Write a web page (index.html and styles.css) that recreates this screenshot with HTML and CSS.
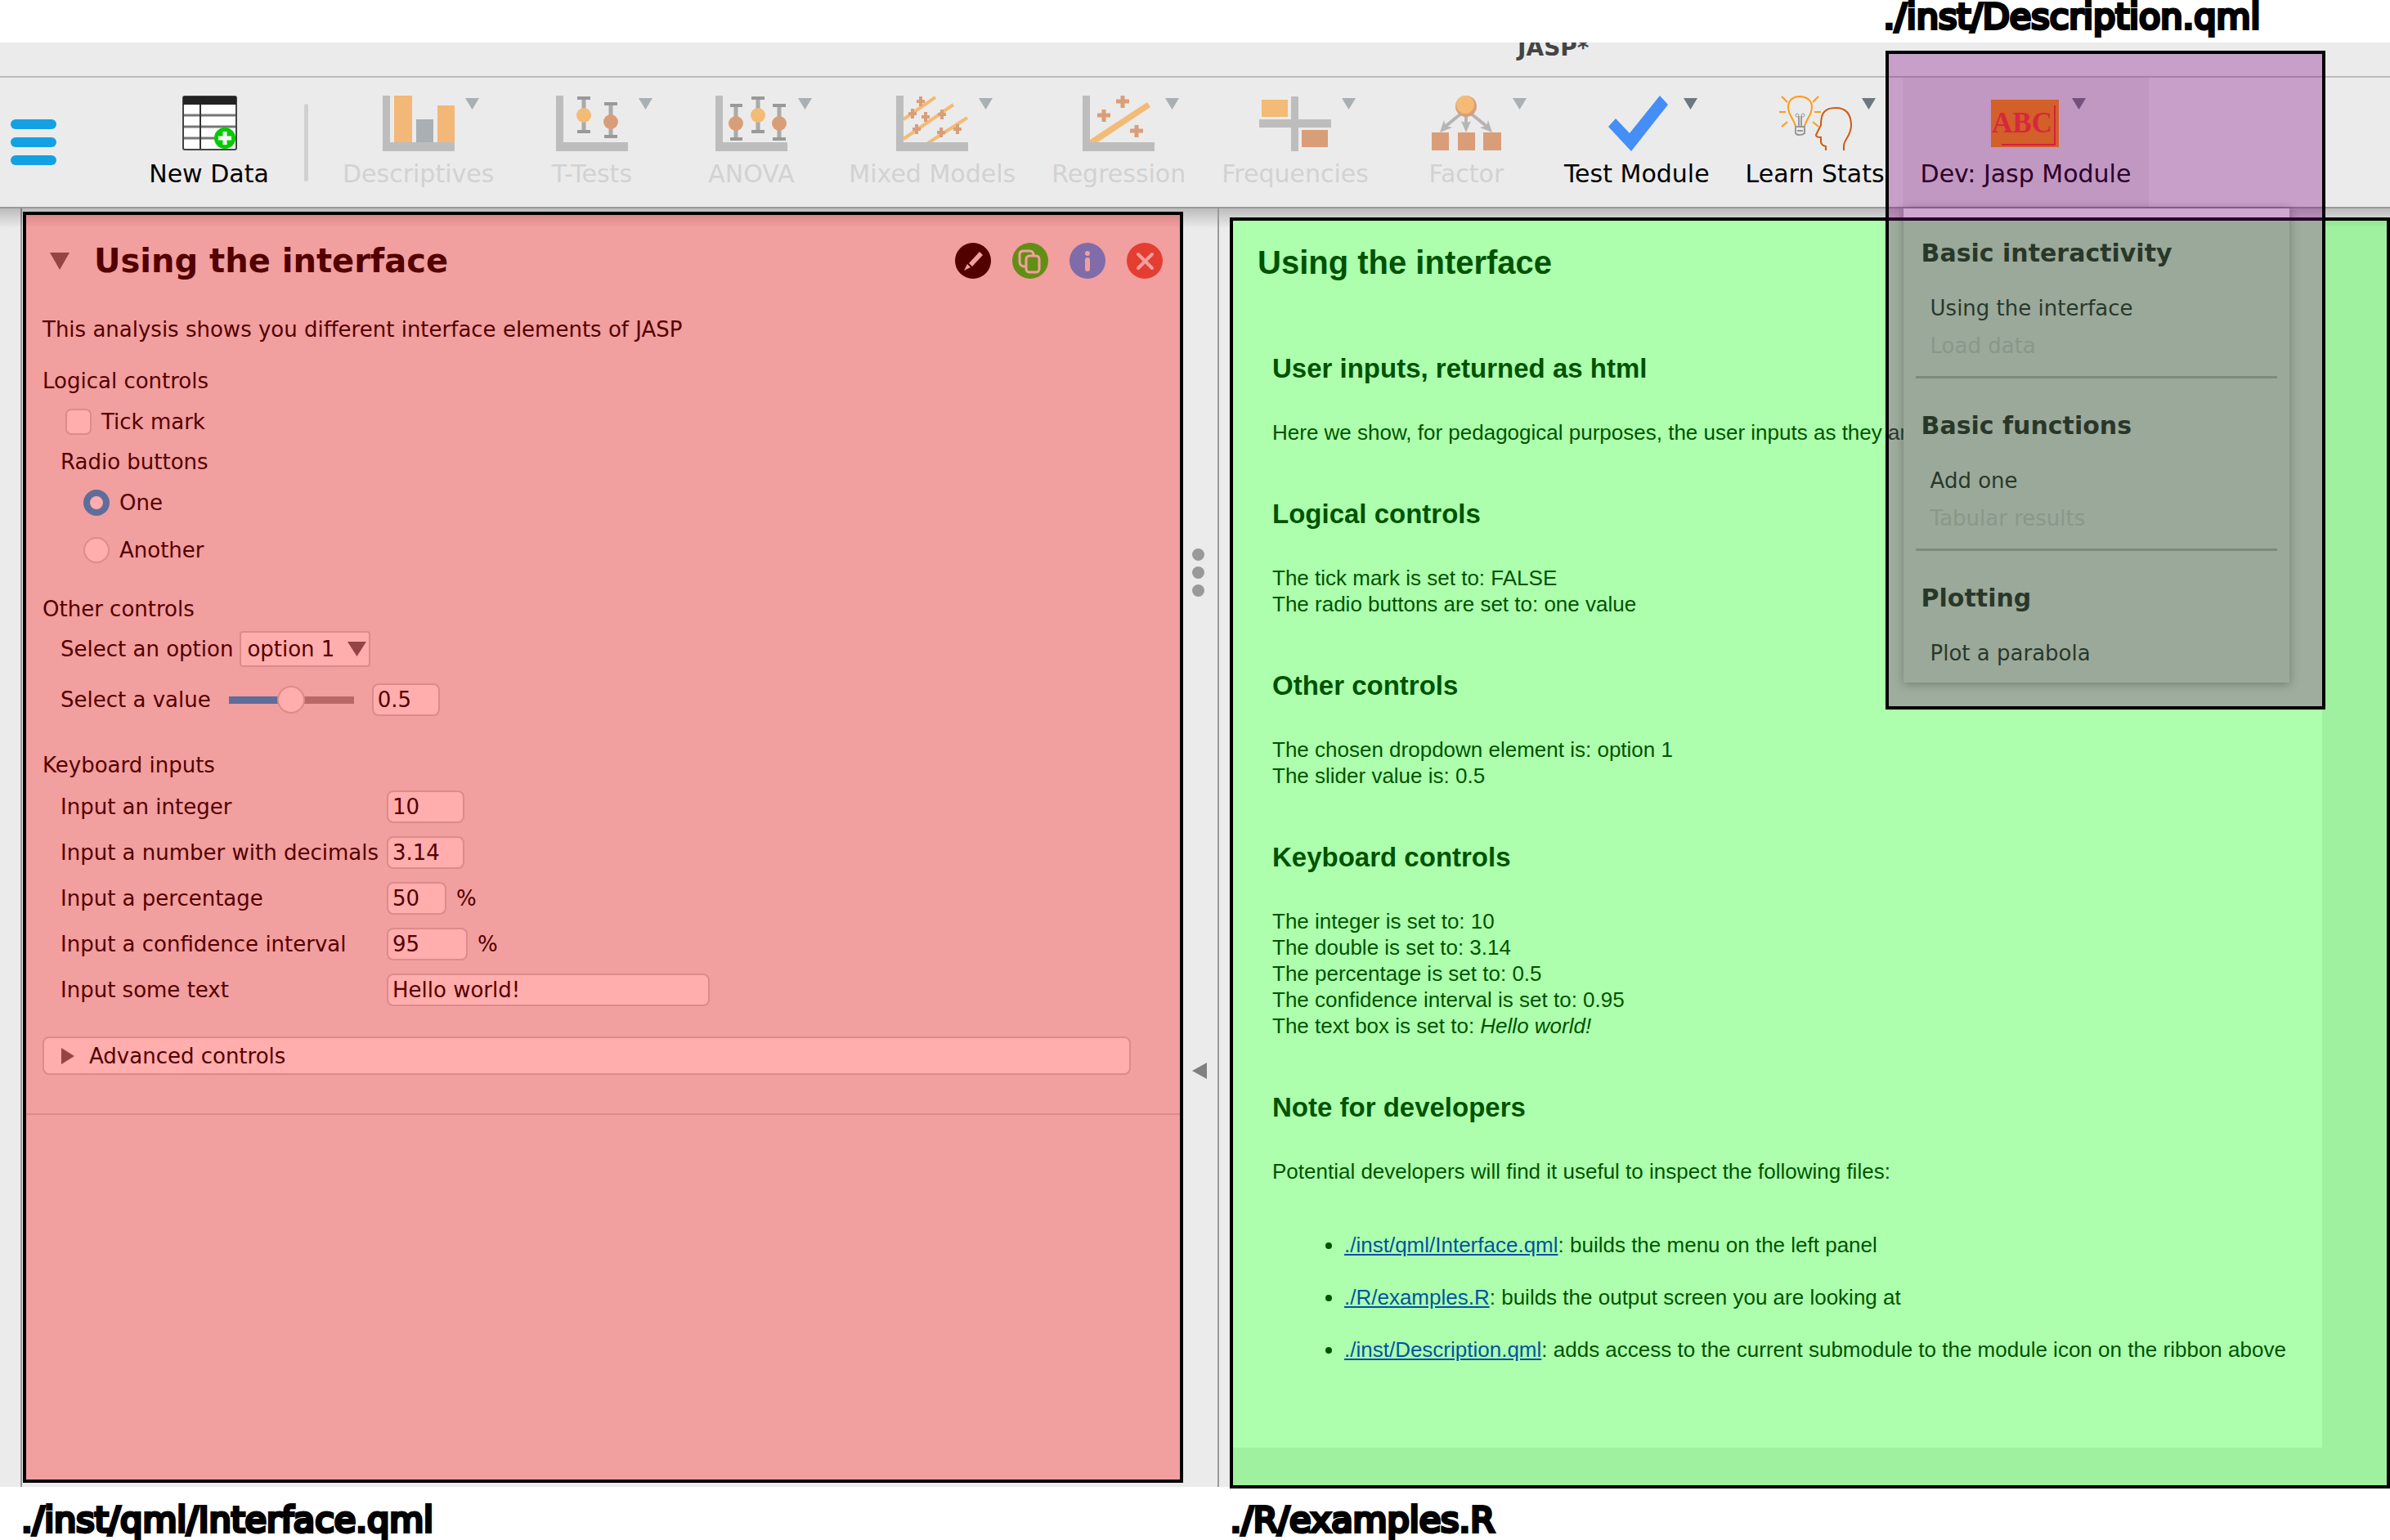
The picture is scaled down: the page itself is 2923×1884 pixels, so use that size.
FILE: index.html
```html
<!DOCTYPE html>
<html lang="en">
<head>
<meta charset="utf-8">
<title>JASP*</title>
<link rel="stylesheet" href="styles.css">
</head>
<body>
<div class="app">
  <header class="titlebar"><span class="title">JASP*</span></header>

  <nav class="ribbon" aria-label="Modules">
    <button class="hamburger" type="button" aria-label="Main menu"><span></span><span></span><span></span></button>
    <button class="tool" type="button">
      <span class="tool-icon">
        <svg class="icon" viewBox="0 0 88 68"><rect x="12" y="1" width="65" height="65" rx="2" fill="#fff"/><path d="M12 24H77M12 38H77M12 52H77" stroke="#777" stroke-width="3"/><path d="M33 9V66" stroke="#333" stroke-width="2"/><rect x="12" y="1" width="65" height="65" rx="2" fill="none" stroke="#444" stroke-width="2"/><path d="M12 1H77V11H12Z" fill="#222"/><circle cx="63" cy="52" r="13" fill="#0c0"/><path d="M63 44V60M55 52H71" stroke="#fff" stroke-width="5"/></svg>
      </span>
      <span>New Data</span>
    </button>
    <div class="separator"></div>
    <button class="tool" type="button" disabled>
      <span class="tool-icon">
        <svg class="icon" viewBox="0 0 88 68"><path d="M0 0H9V57H88V68H0Z" fill="#bdbdbd"/><path d="M14 0H36V57H14ZM67 12H88V57H67Z" fill="#f3b777"/><path d="M41 29H62V57H41Z" fill="#a9afb2"/></svg>
        <svg class="caret" viewBox="0 0 17 14"><path d="M0 0H17L8.500 14Z"/></svg>
      </span>
      <span>Descriptives</span>
    </button>
    <button class="tool" type="button" disabled>
      <span class="tool-icon">
        <svg class="icon" viewBox="0 0 88 68"><path d="M0 0H9V57H88V68H0Z" fill="#bdbdbd"/><path d="M34 2V45M67 9V52" stroke="#aaa" stroke-width="5"/><path d="M26 3H42M26 44H42M59 10H75M59 50H75" stroke="#999" stroke-width="4"/><circle cx="34" cy="24" r="9" fill="#f3bb76"/><circle cx="67" cy="32" r="9" fill="#d99e78"/></svg>
        <svg class="caret" viewBox="0 0 17 14"><path d="M0 0H17L8.500 14Z"/></svg>
      </span>
      <span>T-Tests</span>
    </button>
    <button class="tool" type="button" disabled>
      <span class="tool-icon">
        <svg class="icon" viewBox="0 0 88 68"><path d="M0 0H9V57H88V68H0Z" fill="#bdbdbd"/><path d="M25 11V54M52 2V45M78 11V54" stroke="#aaa" stroke-width="5"/><path d="M18 12H33M18 53H33M44 3H60M44 44H60M70 12H86M70 53H86" stroke="#999" stroke-width="4"/><circle cx="25" cy="34" r="9" fill="#d99e78"/><circle cx="52" cy="24" r="9" fill="#f3bb76"/><circle cx="78" cy="34" r="9" fill="#d99e78"/></svg>
        <svg class="caret" viewBox="0 0 17 14"><path d="M0 0H17L8.500 14Z"/></svg>
      </span>
      <span>ANOVA</span>
    </button>
    <button class="tool" type="button" disabled>
      <span class="tool-icon">
        <svg class="icon" viewBox="0 0 88 68"><path d="M9 29L48 2M9 53L70 11M39 58L87 27" stroke="#f3bb76" stroke-width="4"/><path d="M0 0H9V57H88V68H0Z" fill="#bdbdbd"/><path d="M30 1V13M25 7H35M20 16V28M15 22H25M36 20V32M31 26H41M56 17V29M51 23H61M25 35V47M20 41H30M55 39V51M50 45H60M75 35V47M70 41H80" stroke="#d99e78" stroke-width="4"/></svg>
        <svg class="caret" viewBox="0 0 17 14"><path d="M0 0H17L8.500 14Z"/></svg>
      </span>
      <span>Mixed Models</span>
    </button>
    <button class="tool" type="button" disabled>
      <span class="tool-icon">
        <svg class="icon" viewBox="0 0 88 68"><path d="M9 54L79 8L83 14L17 58H9Z" fill="#f3bb76"/><path d="M0 0H9V57H88V68H0Z" fill="#bdbdbd"/><path d="M49 0V15M41 7H57M26 17V32M18 24H34M66 36V51M58 43H74" stroke="#d99e78" stroke-width="5"/></svg>
        <svg class="caret" viewBox="0 0 17 14"><path d="M0 0H17L8.500 14Z"/></svg>
      </span>
      <span>Regression</span>
    </button>
    <button class="tool" type="button" disabled>
      <span class="tool-icon">
        <svg class="icon" viewBox="0 0 88 68"><path d="M39 1H48V68H39ZM0 29H88V39H0Z" fill="#bdbdbd"/><path d="M3 5H35V26H3Z" fill="#f3bb76"/><path d="M52 42H84V63H52Z" fill="#d99e78"/></svg>
        <svg class="caret" viewBox="0 0 17 14"><path d="M0 0H17L8.500 14Z"/></svg>
      </span>
      <span>Frequencies</span>
    </button>
    <button class="tool" type="button" disabled>
      <span class="tool-icon">
        <svg class="icon" viewBox="0 0 88 68"><path d="M38 22L17 39M44 24V38M50 22L71 39" stroke="#b5b5b5" stroke-width="4"/><path d="M12 45L17 30L19 37L27 39ZM44 45L38 31L44 34L50 31ZM76 45L71 30L69 37L61 39Z" fill="#b5b5b5"/><circle cx="44" cy="13" r="13" fill="#d99e78"/><circle cx="43" cy="11" r="11" fill="#f3bb76"/><path d="M2 45H23V67H2ZM34 45H55V67H34ZM65 45H87V67H65Z" fill="#d99e78"/></svg>
        <svg class="caret" viewBox="0 0 17 14"><path d="M0 0H17L8.500 14Z"/></svg>
      </span>
      <span>Factor</span>
    </button>
    <button class="tool" type="button">
      <span class="tool-icon">
        <svg class="icon" viewBox="0 0 88 68"><path d="M9 38L18 28L35 46L72 0L82 11L37 68Z" fill="#448ef6"/></svg>
        <svg class="caret" viewBox="0 0 17 14"><path d="M0 0H17L8.500 14Z"/></svg>
      </span>
      <span>Test Module</span>
    </button>
    <button class="tool" type="button">
      <span class="tool-icon">
        <svg class="icon" viewBox="0 0 88 68" fill="none"><path d="M20 38C19 30 11 24 11 14C11 5 18 1 25 1S40 5 40 14C40 24 32 30 31 38" stroke="#ff9b1a" stroke-width="2"/><path d="M3 1L10 8M48 1L41 8M0 20H8M43 20H51M3 38L10 32M48 38L41 32" stroke="#ff9b1a" stroke-width="2"/><path d="M24 38V25M27 38V25M20 38H31V46Q29 48 25 48Q21 48 20 46ZM22 43H29" stroke="#999" stroke-width="2"/><circle cx="22" cy="24" r="2" stroke="#999"/><circle cx="29" cy="24" r="2" stroke="#999"/><path d="M57 67V62Q52 61 51 57V51Q45 51 45 48L51 36C51 23 54 15 69 15C83 15 88 24 88 37C88 48 79 55 79 61V67" stroke="#cc5b10" stroke-width="2"/></svg>
        <svg class="caret" viewBox="0 0 17 14"><path d="M0 0H17L8.500 14Z"/></svg>
      </span>
      <span>Learn Stats</span>
    </button>
    <div class="dev">
      <button class="tool active" type="button" aria-expanded="true">
        <span class="tool-icon">
          <svg class="icon" viewBox="0 0 88 68"><path d="M2 5H85V63H2Z" fill="#fb8d00"/><path d="M79 12H81V61H15V59H79Z" fill="#ff3020"/><text class="abc" x="40" y="45" text-anchor="middle">ABC</text></svg>
          <svg class="caret" viewBox="0 0 17 14"><path d="M0 0H17L8.500 14Z"/></svg>
        </span>
        <span>Dev: Jasp Module</span>
      </button>
      <div class="menu">
        <section>
          <h2>Basic interactivity</h2>
          <button type="button">Using the interface</button>
          <button type="button" disabled>Load data</button>
        </section>
        <section>
          <h2>Basic functions</h2>
          <button type="button">Add one</button>
          <button type="button" disabled>Tabular results</button>
        </section>
        <section>
          <h2>Plotting</h2>
          <button type="button">Plot a parabola</button>
        </section>
      </div>
      <div class="callout"><span class="file-name">./inst/Description.qml</span></div>
    </div>
  </nav>

  <main class="workspace">
    <form class="panel options">
      <div class="options-head">
        <svg class="fold" viewBox="0 0 24 21"><path d="M0 0H24L12 21Z" fill="#646464"/></svg>
        <h1>Using the interface</h1>
        <button class="round" type="button" aria-label="Rename"><svg viewBox="0 0 44 44"><circle cx="22" cy="22" r="22" fill="#000"/><path d="M30 11L34 15L21 29L17 25Z" fill="#ebebeb"/><path d="M15 26L19 30L11 34Z" fill="#ebebeb"/></svg></button>
        <button class="round" type="button" aria-label="Duplicate"><svg viewBox="0 0 44 44"><circle cx="22" cy="22" r="22" fill="#1ad220"/><g fill="none" stroke="#ebebeb" stroke-width="3"><path d="M17 29H14Q9 28 9 23V14Q9 10 14 10H21Q26 10 26 15"/><rect x="17" y="16" width="16" height="20" rx="4"/></g></svg></button>
        <button class="round" type="button" aria-label="Information"><svg viewBox="0 0 44 44"><circle cx="22" cy="22" r="22" fill="#449ffa"/><circle cx="22" cy="13" r="3" fill="#ebebeb"/><path d="M22 21V32" stroke="#ebebeb" stroke-width="6" stroke-linecap="round"/></svg></button>
        <button class="round" type="button" aria-label="Close"><svg viewBox="0 0 44 44"><circle cx="22" cy="22" r="22" fill="#d75b4a"/><path d="M14 14L31 31M31 14L14 31" stroke="#ebebeb" stroke-width="4" stroke-linecap="round"/></svg></button>
      </div>
      <div class="options-body">
        <p class="intro">This analysis shows you different interface elements of JASP</p>

        <section class="group">
          <h3>Logical controls</h3>
          <label class="choice"><input type="checkbox">Tick mark</label>
          <div class="radios" role="radiogroup" aria-labelledby="radio-title">
            <p id="radio-title">Radio buttons</p>
            <label class="choice"><input type="radio" name="r" checked>One</label>
            <label class="choice"><input type="radio" name="r">Another</label>
          </div>
        </section>

        <section class="group other">
          <h3>Other controls</h3>
          <div class="row">
            <label for="opt">Select an option</label>
            <span class="dropdown">
              <select id="opt"><option>option 1</option><option>option 2</option></select>
              <svg viewBox="0 0 23 18"><path d="M0 0H23L11.500 18Z" fill="#646464"/></svg>
            </span>
          </div>
          <div class="row slider-row">
            <label for="val">Select a value</label>
            <input id="val" type="range" min="0" max="1" step="0.1" value="0.5">
            <input class="field value" type="text" value="0.5" aria-label="Value">
          </div>
        </section>

        <section class="group">
          <h3>Keyboard inputs</h3>
          <div class="fields">
            <label for="f1">Input an integer</label>
            <span><input class="field short" id="f1" type="text" value="10"></span>
            <label for="f2">Input a number with decimals</label>
            <span><input class="field short" id="f2" type="text" value="3.14"></span>
            <label for="f3">Input a percentage</label>
            <span><input class="field percent" id="f3" type="text" value="50">%</span>
            <label for="f4">Input a confidence interval</label>
            <span><input class="field interval" id="f4" type="text" value="95">%</span>
            <label for="f5">Input some text</label>
            <span><input class="field long" id="f5" type="text" value="Hello world!"></span>
          </div>
        </section>

        <button class="advanced" type="button"><svg viewBox="0 0 16 20"><path d="M0 0L16 10L0 20Z" fill="#646464"/></svg>Advanced controls</button>
      </div>
    </form>

    <div class="splitter">
      <span class="dots"><i></i><i></i><i></i></span>
      <svg viewBox="0 0 18 20"><path d="M18 0V20L0 10Z" fill="#808080"/></svg>
    </div>

    <article class="panel results">
      <div class="page">
        <h1>Using the interface</h1>
        <div class="output">
          <h2>User inputs, returned as html</h2>
          <p>Here we show, for pedagogical purposes, the user inputs as they are</p>
          <h2>Logical controls</h2>
          <p>The tick mark is set to: FALSE<br>The radio buttons are set to: one value</p>
          <h2>Other controls</h2>
          <p>The chosen dropdown element is: option 1<br>The slider value is: 0.5</p>
          <h2>Keyboard controls</h2>
          <p>The integer is set to: 10<br>The double is set to: 3.14<br>The percentage is set to: 0.5<br>The confidence interval is set to: 0.95<br>The text box is set to: <em>Hello world!</em></p>
          <h2>Note for developers</h2>
          <p>Potential developers will find it useful to inspect the following files:</p>
          <ul>
            <li><a href="#interface">./inst/qml/Interface.qml</a>: builds the menu on the left panel</li>
            <li><a href="#examples">./R/examples.R</a>: builds the output screen you are looking at</li>
            <li><a href="#description">./inst/Description.qml</a>: adds access to the current submodule to the module icon on the ribbon above</li>
          </ul>
        </div>
      </div>
    </article>
  </main>
</div>
<footer class="captions">
  <span class="file-name">./inst/qml/Interface.qml</span>
  <span class="file-name">./R/examples.R</span>
</footer>
</body>
</html>
```
FILE: styles.css
```css
* { box-sizing: border-box; }

body {
  margin: 0;
  padding-top: 52px;
  background: #fff;
  color: #000;
  font: 26px/32px "DejaVu Sans", sans-serif;
}

h1, h2, h3, p, ul { margin: 0; font-size: inherit; font-weight: inherit; }
button, input, select { font: inherit; color: inherit; margin: 0; }
button { border: 0; background: none; padding: 0; }
svg { display: block; }

.app { background: #ebebeb; }

.titlebar {
  height: 43px;
  overflow: hidden;
  border-bottom: 2px solid #bbb;
  padding-left: 63.5%;
}
.title {
  display: block;
  margin-top: -9px;
  font-size: 28px;
  font-weight: bold;
  color: #444;
}

/* Ribbon */
.ribbon {
  display: flex;
  height: 160px;
  border-bottom: 2px solid #999;
}
.hamburger {
  width: 158px;
  padding-left: 13px;
  display: flex;
  flex-direction: column;
  justify-content: center;
  gap: 10px;
}
.hamburger span {
  width: 56px;
  height: 12px;
  border-radius: 6px;
  background: #14a1e3;
}
.tool {
  min-width: 195px;
  height: 158px;
  padding: 22px 22px 0;
  display: flex;
  flex-direction: column;
  align-items: center;
  gap: 8px;
  font-size: 30px;
  line-height: 40px;
  white-space: nowrap;
}
.tool:disabled { color: #d2d2d2; }
.tool.active { background: #e1e1e1; }
.tool-icon {
  width: 148px;
  display: grid;
  grid-template-columns: 1fr 88px 1fr;
}
.icon { grid-column: 2; width: 88px; height: 68px; overflow: visible; }
.caret { width: 17px; height: 14px; margin: 3px 0 0 13px; fill: #6c787f; }
.tool:disabled .caret { fill: #a9afb3; }
.abc { font: bold 35px "Liberation Serif", serif; fill: #ff3a20; }
.separator {
  width: 5px;
  height: 95px;
  margin: 32px 20px 0 19px;
  border-radius: 3px;
  background: #d0d0d0;
}

/* Module menu */
.dev { position: relative; }
.menu {
  position: absolute;
  z-index: 2;
  top: 160px;
  left: 1px;
  width: 472px;
  padding: 0 15px 20px;
  background: #f7f7f7;
  box-shadow: 0 2px 12px #0006;
}
.menu section { padding: 35px 0 21px; }
.menu section + section { border-top: 3px solid #b5b5b5; padding-top: 38px; }
.menu section:last-child { padding-bottom: 0; }
.menu h2 {
  padding-left: 7px;
  margin-bottom: 31px;
  font-size: 30px;
  font-weight: bold;
  line-height: 40px;
}
.menu button { display: block; padding-left: 18px; line-height: 32px; }
.menu button + button { margin-top: 14px; }
.menu button:disabled { color: #d2d2d2; }

.callout {
  position: absolute;
  z-index: 4;
  top: -33px;
  left: -21px;
  width: 538px;
  height: 806px;
  border: 4px solid #000;
  background: rgb(128 0 128 / 32%);
  pointer-events: none;
}
.callout .file-name { position: absolute; top: -71px; left: -6px; }

.file-name {
  font-size: 43px;
  line-height: 50px;
  white-space: nowrap;
  -webkit-text-stroke: 4px #000;
}

/* Workspace */
.workspace {
  display: grid;
  grid-template-columns: minmax(0, 1fr) 57px minmax(0, 1fr);
  padding-left: 28px;
  background:
    linear-gradient(#0003, #0000) 0 0 / 100% 24px no-repeat,
    linear-gradient(#999, #999) 25px 0 / 2px 100% no-repeat;
}
.panel { position: relative; }
.panel::after {
  content: "";
  position: absolute;
  z-index: 3;
  inset: 0;
  border: 4px solid #000;
  pointer-events: none;
}
.options { margin: 4px 0 5px; }
.options::after { background: rgb(255 0 0 / 32%); }
.results { margin: 11px 0 -2px; padding: 4px 83px 50px 4px; }
.results::after { background: rgb(0 255 0 / 32%); }

.options-head {
  display: flex;
  align-items: center;
  gap: 26px;
  padding: 38px 25px 0 33px;
}
.options-head h1 {
  flex: 1;
  margin-left: 4px;
  font-size: 40px;
  font-weight: bold;
  line-height: 44px;
}
.fold { width: 24px; height: 21px; }
.round, .round svg { width: 44px; height: 44px; }

.options-body {
  padding: 46px 64px 47px 24px;
  border-bottom: 2px solid #ccc;
}
.intro { margin-bottom: 31px; }
.group { margin-bottom: 40px; }
.group.other { margin-bottom: 44px; }
.choice { display: flex; align-items: center; gap: 12px; }
.choice input {
  appearance: none;
  width: 32px;
  height: 32px;
  border: 2px solid #ccc;
  border-radius: 7px;
  background: #fff;
}
.group > .choice { margin: 18px 0 17px 28px; }
.radios { padding-left: 22px; }
.radios .choice { margin: 18px 0 0 28px; }
.radios .choice + .choice { margin-top: 26px; }
.choice input[type="radio"] { border-radius: 50%; }
.choice input[type="radio"]:checked { border: 8px solid #14a1e3; }

.row { display: flex; align-items: center; gap: 8px; margin: 11px 0 0 22px; }
.dropdown { display: grid; align-items: center; }
.dropdown select {
  grid-area: 1 / 1;
  appearance: none;
  width: 160px;
  height: 44px;
  padding: 0 7px;
  border: 2px solid #ccc;
  border-radius: 4px;
  background: #fff;
}
.dropdown svg { grid-area: 1 / 1; justify-self: end; width: 23px; height: 18px; margin-right: 5px; pointer-events: none; }
.slider-row { margin-top: 20px; gap: 22px; }
input[type="range"] {
  appearance: none;
  width: 153px;
  height: 34px;
  background: linear-gradient(90deg, #14a1e3 50%, #999 50%) center / 100% 9px no-repeat;
}
input[type="range"]::-webkit-slider-thumb {
  appearance: none;
  width: 34px;
  height: 34px;
  border: 2px solid #ccc;
  border-radius: 50%;
  background: #fff;
}
.field {
  height: 40px;
  padding: 0 5px;
  border: 2px solid #ccc;
  border-radius: 8px;
  background: #fff;
}
.value { width: 83px; }
.short { width: 95px; }
.percent { width: 73px; }
.interval { width: 99px; }
.long { width: 395px; }
.fields {
  display: grid;
  grid-template-columns: max-content 1fr;
  align-items: center;
  gap: 16px 10px;
  margin: 15px 0 0 22px;
}
.fields span { display: flex; align-items: center; gap: 12px; }
.group:has(.fields) { margin-bottom: 37px; }
.advanced {
  display: flex;
  align-items: center;
  gap: 18px;
  width: 100%;
  height: 47px;
  padding-left: 21px;
  border: 2px solid #ccc;
  border-radius: 8px;
  background: #fff;
}
.advanced svg { width: 16px; height: 20px; }

.splitter {
  display: flex;
  flex-direction: column;
  align-items: flex-start;
  padding: 416px 0 0 11px;
  gap: 570px;
  background: linear-gradient(#999, #999) 42px 0 / 2px 100% no-repeat;
}
.dots { display: grid; gap: 7px; }
.dots i { width: 15px; height: 15px; border-radius: 50%; background: #999; }
.splitter svg { width: 18px; height: 20px; }

/* Results */
.page {
  padding: 26px 0 104px 30px;
  background: #fff;
  font-family: "Liberation Sans", Arial, sans-serif;
}
.page h1 { font-size: 40px; font-weight: bold; line-height: 50px; }
.output { padding: 85px 0 0 18px; }
.output h2 { margin-bottom: 42px; font-size: 33px; font-weight: bold; line-height: 40px; }
.output p + h2 { margin-top: 64px; }
.output p, .output li { white-space: nowrap; }
.output ul { margin-top: 58px; padding-left: 88px; }
.output li + li { margin-top: 32px; }
.output a { color: #00e; }

.captions {
  display: grid;
  grid-template-columns: minmax(0, 1fr) minmax(0, 1fr);
  column-gap: 60px;
  padding: 15px 0 2px 26px;
}
```
